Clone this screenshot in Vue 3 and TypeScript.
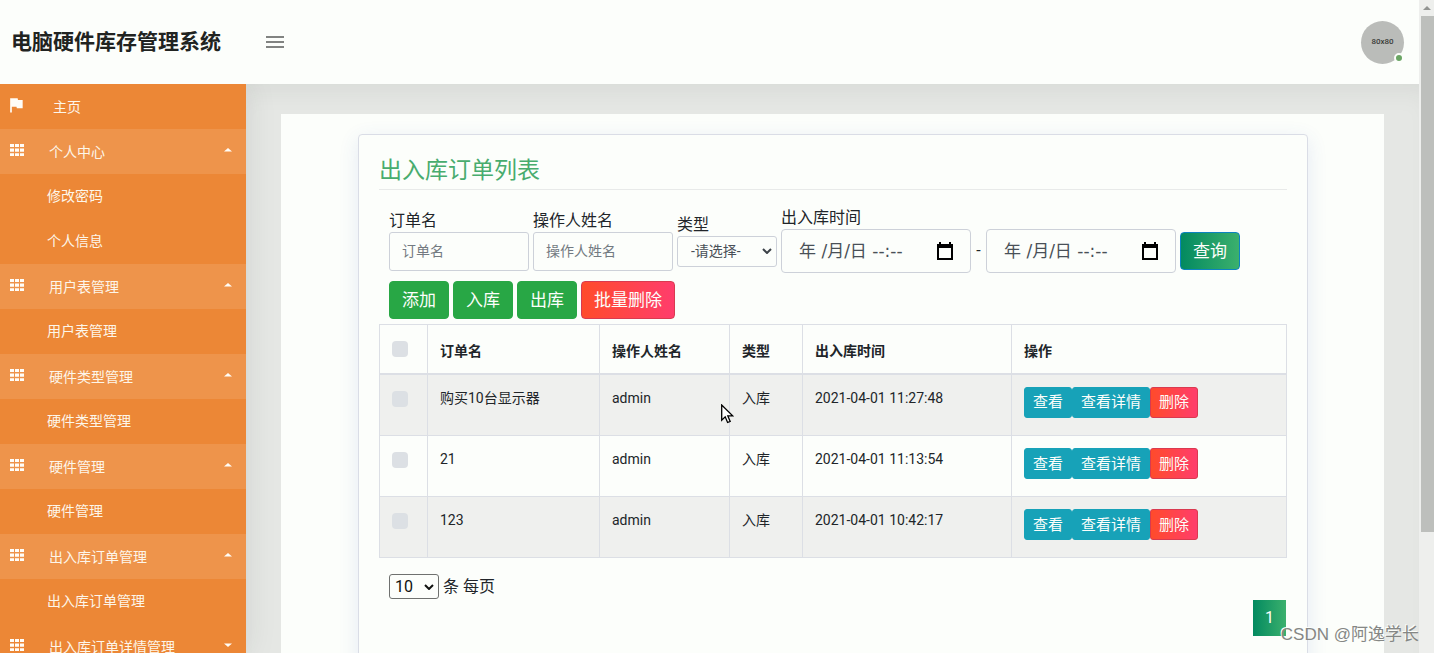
<script setup lang="ts">
import { computed, ref } from 'vue'

interface MenuGroup {
  title: string
  open: boolean
  children: string[]
}

interface Order {
  id: number
  name: string
  operator: string
  type: string
  time: string
}

const groups = ref<MenuGroup[]>([
  { title: '个人中心', open: true, children: ['修改密码', '个人信息'] },
  { title: '用户表管理', open: true, children: ['用户表管理'] },
  { title: '硬件类型管理', open: true, children: ['硬件类型管理'] },
  { title: '硬件管理', open: true, children: ['硬件管理'] },
  { title: '出入库订单管理', open: true, children: ['出入库订单管理'] },
  { title: '出入库订单详情管理', open: false, children: ['出入库订单详情管理'] },
])

const orders: Order[] = [
  { id: 3, name: '购买10台显示器', operator: 'admin', type: '入库', time: '2021-04-01 11:27:48' },
  { id: 2, name: '21', operator: 'admin', type: '入库', time: '2021-04-01 11:13:54' },
  { id: 1, name: '123', operator: 'admin', type: '入库', time: '2021-04-01 10:42:17' },
]

const selected = ref<number[]>([])
const allSelected = computed({
  get: () => selected.value.length === orders.length,
  set: (on: boolean) => {
    selected.value = on ? orders.map((o) => o.id) : []
  },
})

const orderName = ref('')
const operatorName = ref('')
const orderType = ref('')
const timeStart = ref('')
const timeEnd = ref('')
const pageSize = ref('10')
</script>

<template>
  <div class="app">
    <div class="page">
      <header class="topbar">
        <h1 class="brand">电脑硬件库存管理系统</h1>
        <button class="menu-toggle" type="button" aria-label="菜单">
          <svg viewBox="0 0 24 24" width="24" height="24"><path d="M3 6h18v2H3zM3 11h18v2H3zM3 16h18v2H3z" /></svg>
        </button>
        <div class="avatar">
          <span class="avatar-text">80x80</span>
          <span class="status"></span>
        </div>
      </header>

      <div class="body">
        <nav class="sidebar">
          <a class="item home" href="#">
            <svg class="flag" viewBox="0 0 24 24" width="20" height="20"><path d="M14.4 6L14 4H5v17h2v-7h5.6l.4 2h7V6z" /></svg>
            <span class="item-text">主页</span>
          </a>
          <template v-for="g in groups" :key="g.title">
            <button class="item group" :class="{ open: g.open }" type="button" :aria-expanded="g.open" @click="g.open = !g.open">
              <svg class="grid" viewBox="0 0 14 12" width="14" height="12">
                <path d="M0 0h4v3H0zM5 0h4v3H5zM10 0h4v3h-4zM0 4.6h4v3.2H0zM5 4.6h4v3.2H5zM10 4.6h4v3.2h-4zM0 9.2h4V12H0zM5 9.2h4V12H5zM10 9.2h4V12h-4z" />
              </svg>
              <span class="item-text">{{ g.title }}</span>
              <svg class="caret" viewBox="0 0 8 4" width="8" height="4">
                <path :d="g.open ? 'M0 3.5L4 0l4 3.5z' : 'M0 .5L4 4 8 .5z'" />
              </svg>
            </button>
            <template v-if="g.open">
              <a v-for="c in g.children" :key="c" class="item child" href="#">{{ c }}</a>
            </template>
          </template>
        </nav>

        <main class="main">
          <div class="panel">
            <section class="card">
              <h2 class="title">出入库订单列表</h2>

              <form class="filters" @submit.prevent>
                <div class="field">
                  <label for="order-name">订单名</label>
                  <input id="order-name" v-model="orderName" class="text" type="text" placeholder="订单名" />
                </div>
                <div class="field">
                  <label for="operator-name">操作人姓名</label>
                  <input id="operator-name" v-model="operatorName" class="text" type="text" placeholder="操作人姓名" />
                </div>
                <div class="field">
                  <label for="order-type">类型</label>
                  <div class="select-wrap">
                    <select id="order-type" v-model="orderType" class="type-select">
                      <option value="">-请选择-</option>
                      <option value="in">入库</option>
                      <option value="out">出库</option>
                    </select>
                    <svg class="chevron" viewBox="0 0 10 6" width="10" height="6"><path d="M1 1l4 4 4-4" /></svg>
                  </div>
                </div>
                <div class="field">
                  <label for="time-start">出入库时间</label>
                  <div class="range">
                    <div class="date">
                      <input id="time-start" v-model="timeStart" type="text" placeholder="年 /月/日 --:--" />
                      <button type="button" aria-label="选择开始时间">
                        <svg viewBox="0 0 16 18" width="16" height="18"><path d="M2 0h2v2h8V0h2v2h2v16H0V2h2zM2 6v10h12V6z" fill-rule="evenodd" /></svg>
                      </button>
                    </div>
                    <span class="dash">-</span>
                    <div class="date">
                      <input v-model="timeEnd" type="text" placeholder="年 /月/日 --:--" aria-label="结束时间" />
                      <button type="button" aria-label="选择结束时间">
                        <svg viewBox="0 0 16 18" width="16" height="18"><path d="M2 0h2v2h8V0h2v2h2v16H0V2h2zM2 6v10h12V6z" fill-rule="evenodd" /></svg>
                      </button>
                    </div>
                    <button class="btn query" type="submit">查询</button>
                  </div>
                </div>
              </form>

              <div class="actions">
                <button class="btn success" type="button">添加</button>
                <button class="btn success" type="button">入库</button>
                <button class="btn success" type="button">出库</button>
                <button class="btn danger" type="button">批量删除</button>
              </div>

              <table class="orders">
                <colgroup>
                  <col class="c-check" /><col class="c-name" /><col class="c-operator" /><col class="c-type" /><col class="c-time" /><col />
                </colgroup>
                <thead>
                  <tr>
                    <th class="check"><input v-model="allSelected" type="checkbox" aria-label="全选" /></th>
                    <th>订单名</th>
                    <th>操作人姓名</th>
                    <th>类型</th>
                    <th>出入库时间</th>
                    <th>操作</th>
                  </tr>
                </thead>
                <tbody>
                  <tr v-for="o in orders" :key="o.id">
                    <td class="check"><input v-model="selected" type="checkbox" :value="o.id" :aria-label="o.name" /></td>
                    <td>{{ o.name }}</td>
                    <td>{{ o.operator }}</td>
                    <td>{{ o.type }}</td>
                    <td>{{ o.time }}</td>
                    <td>
                      <div class="row-actions">
                        <button class="btn small info" type="button">查看</button>
                        <button class="btn small info" type="button">查看详情</button>
                        <button class="btn small danger" type="button">删除</button>
                      </div>
                    </td>
                  </tr>
                </tbody>
              </table>

              <div class="page-size">
                <div class="select-wrap">
                  <select id="page-size" v-model="pageSize" class="size-select">
                    <option>10</option>
                    <option>25</option>
                    <option>50</option>
                  </select>
                  <svg class="chevron dark" viewBox="0 0 10 6" width="10" height="6"><path d="M1 1l4 4 4-4" /></svg>
                </div>
                <label for="page-size">条 每页</label>
              </div>
              <div class="pagination"><a href="#" aria-current="page">1</a></div>
            </section>
          </div>
        </main>
      </div>
    </div>

    <div class="scrollbar" aria-hidden="true">
      <svg viewBox="0 0 8 4" width="8" height="4"><path d="M0 4l4-4 4 4z" /></svg>
      <div class="thumb"></div>
    </div>

    <svg class="pointer" viewBox="0 0 13 20" width="13" height="20" aria-hidden="true">
      <path d="M.7 1v15.2l3.5-3.4 2.4 5.7 2.6-1.1-2.4-5.5h4.9z" />
    </svg>
    <div class="watermark">CSDN @阿逸学长</div>
  </div>
</template>

<style>
body {
  margin: 0;
  background: #fcfefb;
}
</style>

<style scoped>
* {
  box-sizing: border-box;
}

.app {
  position: relative;
  display: flex;
  height: 100vh;
  overflow: hidden;
  background: #fcfefb;
  color: #212529;
  font-family: Roboto, "Noto Sans CJK SC", sans-serif;
  font-size: 16px;
  line-height: 24px;
}

input,
select,
button {
  margin: 0;
  font-family: inherit;
}

button {
  cursor: pointer;
}

a {
  text-decoration: none;
}

.page {
  flex: 1;
  min-width: 0;
  display: flex;
  flex-direction: column;
}

.topbar {
  position: relative;
  z-index: 2;
  flex: none;
  display: flex;
  align-items: center;
  height: 84px;
  padding: 0 15px 0 11px;
  background: #fcfefb;
}

.brand {
  width: 252px;
  margin: 0;
  color: #212321;
  font-size: 21px;
  font-weight: 700;
}

.menu-toggle {
  display: flex;
  padding: 0;
  border: 0;
  background: none;
  fill: #818381;
}

.avatar {
  position: relative;
  display: flex;
  align-items: center;
  justify-content: center;
  width: 43px;
  height: 43px;
  margin-left: auto;
  border-radius: 50%;
  background: #babcb9;
}

.avatar-text {
  color: #3a3c3a;
  font-size: 8px;
  font-weight: 500;
}

.status {
  position: absolute;
  right: 0;
  bottom: 1px;
  width: 10px;
  height: 10px;
  border: 2px solid #fcfefb;
  border-radius: 50%;
  background: #6aa564;
}

.body {
  flex: 1;
  display: flex;
  min-height: 0;
}

.sidebar {
  position: relative;
  z-index: 1;
  flex: none;
  width: 246px;
  overflow: hidden;
  background: #ec8736;
  box-shadow: 0 0 30px rgba(40, 48, 40, 0.1);
}

.item {
  display: flex;
  align-items: center;
  width: 100%;
  height: 45px;
  padding: 0 14px 2px 10px;
  border: 0;
  background: none;
  color: #fdf6ea;
  font-size: 14px;
  text-align: left;
  fill: #fffdf8;
}

.item.open {
  background: #ee944b;
}

.item.home {
  padding-bottom: 0;
  padding-left: 6px;
}

.item.child {
  padding-left: 47px;
}

.item-text {
  flex: 1;
  margin-left: 25px;
}

.home .item-text {
  margin-left: 27px;
}

.flag {
  margin-bottom: 3px;
}

.grid,
.caret {
  margin-bottom: 1px;
}

.main {
  flex: 1;
  min-width: 0;
  padding: 30px 35px 0;
  overflow: hidden;
  background: #e5e7e4;
  box-shadow: inset 0 20px 30px -20px rgba(40, 48, 40, 0.1);
}

.panel {
  min-height: 100%;
  padding: 20px 76px 20px 77px;
  background: #fcfefb;
}

.card {
  min-height: 600px;
  padding: 20px;
  border: 1px solid #dadde6;
  border-radius: 4px;
  background: #fcfefb;
  box-shadow: 0 5px 20px rgba(60, 90, 190, 0.12);
}

.title {
  margin: 0 0 15px;
  padding-bottom: 2px;
  border-bottom: 1px solid #e8eae9;
  color: #48ac6e;
  font-size: 23px;
  font-weight: 400;
  line-height: 32px;
}

.filters {
  display: flex;
  align-items: center;
  gap: 4px;
  padding-left: 10px;
}

.field {
  display: flex;
  flex-direction: column;
}

.field label {
  height: 24px;
  line-height: 26px;
}

.text {
  width: 140px;
  height: 39px;
  padding: 0 12px;
  border: 1px solid #cdd1d9;
  border-radius: 3px;
  background: transparent;
  color: #495057;
  font-size: 14px;
}

.text::placeholder {
  color: #737a81;
  opacity: 1;
}

.select-wrap {
  position: relative;
  display: flex;
  align-items: center;
}

.select-wrap select {
  appearance: none;
  background: transparent;
}

.type-select {
  width: 100px;
  height: 31px;
  padding: 0 20px 0 13px;
  border: 1px solid #cdd1d9;
  border-radius: 3px;
  color: #495057;
  font-size: 14px;
}

.chevron {
  position: absolute;
  right: 5px;
  fill: none;
  stroke: #3c4248;
  stroke-width: 2;
  pointer-events: none;
}

.chevron.dark {
  stroke: #101210;
}

.range {
  display: flex;
  align-items: center;
}

.date {
  display: flex;
  align-items: center;
  width: 190px;
  height: 44px;
  padding: 0 17px;
  border: 1px solid #cdd1d9;
  border-radius: 4px;
}

.date input {
  flex: 1;
  min-width: 0;
  padding: 0;
  border: 0;
  outline: 0;
  background: none;
  color: #495057;
  font-family: "DejaVu Sans", "Noto Sans CJK SC", sans-serif;
  font-size: 17px;
}

.date input::placeholder {
  color: #495057;
  opacity: 1;
}

.date button {
  display: flex;
  padding: 0;
  border: 0;
  background: none;
}

.dash {
  width: 15px;
  text-align: center;
}

.btn {
  height: 38px;
  padding: 0 12px;
  border: 1px solid transparent;
  border-radius: 4px;
  color: #fcfefb;
  font-size: 17px;
  line-height: 24px;
  white-space: nowrap;
}

.btn.query {
  margin-left: 4px;
  border-color: #0c83c0;
  background: linear-gradient(90deg, #038a60, #3bb06d);
}

.btn.success {
  border-color: #28a745;
  background: #28a745;
}

.btn.info {
  border-color: #17a2b8;
  background: #17a2b8;
}

.btn.danger {
  border-color: #d93a50;
  background: linear-gradient(90deg, #ff4b2b, #ff3d6c);
}

.btn.small {
  height: 31px;
  padding: 0 8px;
  border-radius: 3px;
  font-size: 15px;
}

.actions {
  display: flex;
  gap: 4px;
  margin: 8px 0 5px;
  padding-left: 10px;
}

.orders {
  width: 100%;
  border-collapse: collapse;
  table-layout: fixed;
  font-size: 14px;
  line-height: 21px;
}

.c-check {
  width: 48px;
}

.c-name {
  width: 172px;
}

.c-operator {
  width: 130px;
}

.c-type {
  width: 73px;
}

.c-time {
  width: 209px;
}

.orders th,
.orders td {
  padding: 12px 12px 0;
  border: 1px solid #dcdfe5;
  text-align: left;
  vertical-align: top;
}

.orders th {
  height: 49px;
  padding-top: 16px;
  border-bottom-width: 2px;
  font-weight: 700;
}

.orders td {
  height: 61px;
  line-height: 23px;
}

.orders tbody tr:first-child td {
  height: 62px;
}

.orders tbody tr:nth-child(odd) {
  background: #eff0ee;
}

.orders input {
  display: block;
  appearance: none;
  width: 16px;
  height: 16px;
  margin-top: 4px;
  border-radius: 4px;
  background: #dce0e4;
}

.orders th input {
  margin-top: 0;
}

.orders input:checked {
  background: #17a2b8;
}

.row-actions {
  display: flex;
}

.page-size {
  display: flex;
  align-items: center;
  gap: 4px;
  margin-top: 16px;
  padding-left: 10px;
}

.size-select {
  width: 50px;
  height: 25px;
  padding: 0 16px 0 5px;
  border: 1px solid #6f716f;
  border-radius: 3px;
  color: #101210;
  font-size: 16px;
}

.pagination {
  display: flex;
  justify-content: flex-end;
  margin: 1px 1px 0 0;
}

.pagination a {
  width: 33px;
  height: 36px;
  background: linear-gradient(90deg, #038a60, #3bb06d);
  color: #fcfefb;
  font-size: 16px;
  line-height: 36px;
  text-align: center;
}

.scrollbar {
  flex: none;
  display: flex;
  flex-direction: column;
  align-items: flex-end;
  width: 15px;
  background: #eeefed;
}

.scrollbar svg {
  flex: none;
  margin: 6px 3px;
  fill: #929492;
}

.thumb {
  width: 13px;
  height: 79%;
  background: #bdbfbc;
}

.pointer {
  position: absolute;
  z-index: 5;
  left: 721px;
  top: 404px;
  fill: #fff;
  stroke: #000;
  stroke-width: 1.3;
}

.watermark {
  position: absolute;
  z-index: 5;
  right: 15px;
  bottom: 6px;
  color: #858785;
  font-family: "Liberation Sans", "Noto Sans CJK SC", sans-serif;
  font-size: 17px;
  text-shadow: -1px -1px 0 #fcfefb;
  white-space: nowrap;
  pointer-events: none;
}
</style>
